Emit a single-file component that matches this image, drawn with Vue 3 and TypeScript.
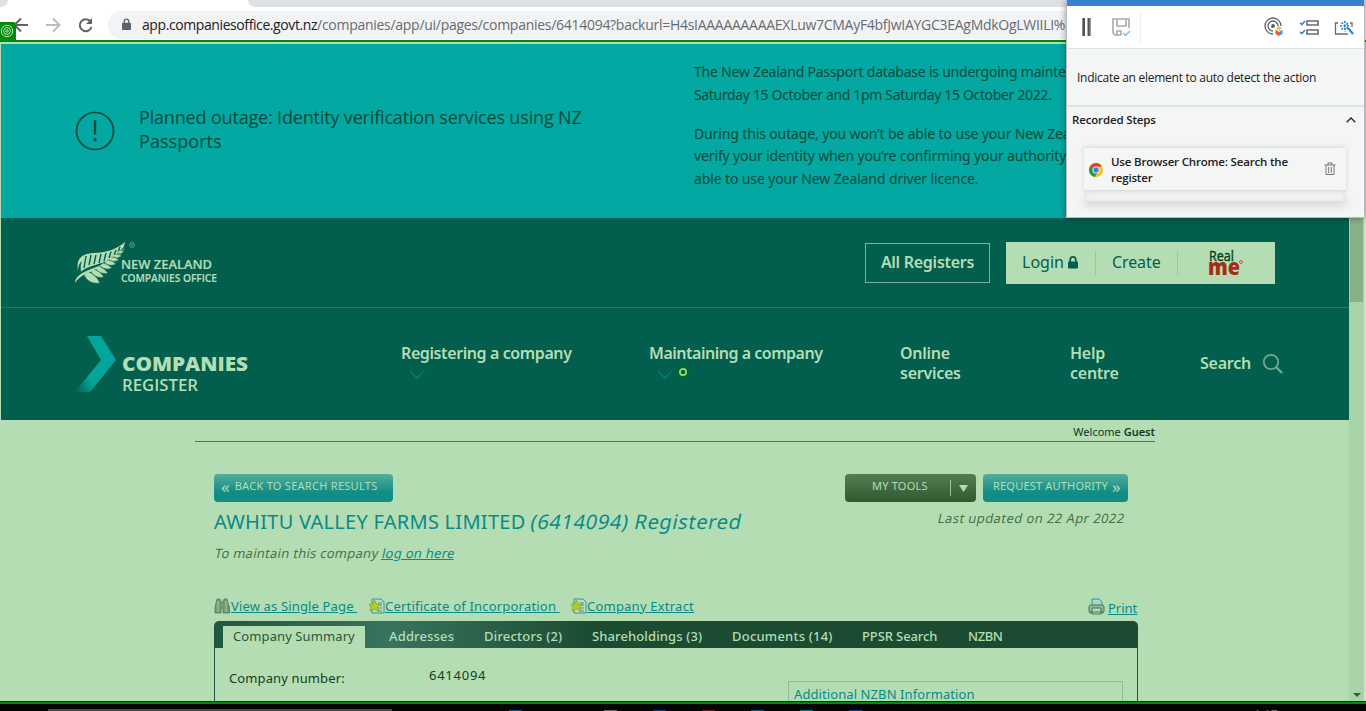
<script setup lang="ts">
interface Tab { label: string; left: number; width: number; spacing: number }

const tabs: Tab[] = [
  { label: 'Addresses', left: 389, width: 66, spacing: 0.15 },
  { label: 'Directors (2)', left: 484, width: 79, spacing: 0.2 },
  { label: 'Shareholdings (3)', left: 592, width: 112, spacing: 0.12 },
  { label: 'Documents (14)', left: 732, width: 101, spacing: 0.22 },
  { label: 'PPSR Search', left: 862, width: 76, spacing: -0.1 },
  { label: 'NZBN', left: 968, width: 35, spacing: -0.4 },
]
const gapBefore = (i: number): string => {
  const previousEnd = i === 0 ? 365 : tabs[i - 1].left + tabs[i - 1].width
  return `${tabs[i].left - previousEnd}px`
}
const lowerLeaflets = [
  'M9 34Q14 44 25 42Q21 34 14 31', 'M16 31Q21 38 29 36Q25 30 19 28', 'M21 28Q26 34 33 32Q29 27 24 25',
  'M25 25Q31 30 37 27Q33 23 28 22', 'M30 22Q35 26 41 23Q37 19 32 19', 'M34 19Q39 22 44 19Q41 16 36 16',
  'M38 16Q43 18 47 15Q44 13 40 13', 'M42 12Q46 14 49 10Q46 9 43 10',
]
</script>

<template>
  <div class="screen">
    <header class="browser">
      <div class="strip"><i class="strip-left"></i><i class="active-tab"></i><i class="strip-rest"></i></div>
      <div class="toolbar">
        <svg class="nav-icons" width="96" height="20" viewBox="0 0 96 20" fill="none" stroke="#5f6368" stroke-width="2">
          <path d="M16 10H3M9 3.500L2.500 10L9 16.500" />
          <path d="M34 10H47M41 3.500L47.500 10L41 16.500" stroke="#babcbe" />
          <path d="M78.500 6.500A6 6 0 1 0 79.500 12" /><path d="M80 3V9H74Z" fill="#5f6368" stroke="none" />
        </svg>
        <div class="address">
          <svg width="9" height="13" viewBox="0 0 10 14"><path d="M2.500 6V3.500a2.500 2.500 0 0 1 5 0V6" fill="none" stroke="#5f6368" stroke-width="1.500" /><rect y="5" width="10" height="8" rx="1" fill="#5f6368" /></svg>
          <span class="url"><b>app.companiesoffice.govt.nz</b>/companies/app/ui/pages/companies/6414094?backurl=H4sIAAAAAAAAAEXLuw7CMAyF4bfJwIAYGC3EAgMdkOgLWIILI%</span>
        </div>
      </div>
    </header>
    <div class="target-badge">
      <svg width="14" height="14" viewBox="0 0 14 14" fill="none" stroke="#b9e3ba"><circle cx="7" cy="7" r="5.700" /><circle cx="7" cy="7" r="3.400" /><circle cx="7" cy="7" r="1.200" /></svg>
    </div>

    <div class="viewport">
      <main class="page">
        <section class="banner">
          <svg class="alert" width="40" height="40" viewBox="0 0 40 40" fill="none" stroke="#064b39" stroke-width="1.700"><circle cx="20" cy="20" r="18.500" /><path d="M20 9V23.500" stroke-width="2.400" /><circle cx="20" cy="28.700" r="1.600" fill="#064b39" stroke="none" /></svg>
          <h2>Planned outage: Identity verification services using NZ<br><span>Passports</span></h2>
          <div class="notice">
            <p><span class="n1">The New Zealand Passport database is undergoing mainte</span><br><span class="n2">Saturday 15 October and 1pm Saturday 15 October 2022.</span></p>
            <p><span class="n3">During this outage, you won’t be able to use your New Zea</span><br><span class="n4">verify your identity when you’re confirming your authority</span><br><span class="n5">able to use your New Zealand driver licence.</span></p>
          </div>
        </section>

        <section class="office">
          <svg class="office-logo" width="146" height="46" viewBox="0 0 146 46" fill="#b4ddb4">
            <g>
              <path d="M0 42C0 36 6 32 16 28Q42 19 50 6Q45 18 32 24C17 31 5 33 0 42Z" />
              <path d="M3 30C1 19 5 13 18 12C31 12 42 8 50 1Q49 7 46 10Q38 20 24 23Q9 27 6 31Q5 24 7 20Q3 23 3 30Z" />
              <path d="M9 27L11 15M14 24L16 14M19 23L21 14M24 22L26 13M29 20L31 12M34 17L36 10.500M39 14L41 9M43 11L45 6" fill="none" stroke="#025e4d" stroke-width="1.400" />
              <path d="M6 31C17 23 39 23 48 7" fill="none" stroke="#025e4d" stroke-width=".700" />
              <path v-for="d in lowerLeaflets" :key="d" :d="d" stroke="#025e4d" stroke-width=".500" />
            </g>
            <circle cx="57" cy="4" r="2.400" fill="none" stroke="#75ad91" stroke-width=".800" /><path d="M56 4H58" stroke="#75ad91" />
            <text x="46" y="28" textLength="91" lengthAdjust="spacingAndGlyphs" class="logo-text">NEW ZEALAND</text>
            <text x="46" y="41" textLength="96" lengthAdjust="spacingAndGlyphs" class="logo-small">COMPANIES OFFICE</text>
          </svg>
          <a class="registers">All Registers</a>
          <div class="account">
            <a class="login">Login <svg width="10" height="13" viewBox="0 0 10 13"><path d="M2.200 6V3.700a2.800 2.800 0 0 1 5.600 0V6" fill="none" stroke="#025e4d" stroke-width="1.700" /><rect y="5.500" width="10" height="7" rx="1" fill="#025e4d" /></svg></a>
            <a class="create">Create</a>
            <svg class="realme" width="36" height="30" viewBox="0 0 36 30"><text x="-1" y="13" textLength="25" lengthAdjust="spacingAndGlyphs" class="real">Real</text><text x="-2" y="27" textLength="32" lengthAdjust="spacingAndGlyphs" class="me">me</text><circle cx="31" cy="14" r="1.500" fill="none" stroke="#b66a43" /></svg>
          </div>
        </section>

        <nav class="menu">
          <svg class="register-logo" width="175" height="60" viewBox="0 0 175 60">
            <defs><linearGradient id="arrow" x1="0" y1="1" x2="1" y2="0"><stop offset="0" stop-color="#025e4d" /><stop offset=".300" stop-color="#04a69c" /><stop offset="1" stop-color="#02a59c" /></linearGradient></defs>
            <path d="M12 1H26L41 25L15 57H0L26 25Z" fill="url(#arrow)" />
            <text x="47" y="36" textLength="126" lengthAdjust="spacingAndGlyphs" class="companies">COMPANIES</text><text x="47" y="56" textLength="76" lengthAdjust="spacingAndGlyphs" class="register">REGISTER</text>
          </svg>
          <a class="m1">Registering a company<svg width="16" height="10" viewBox="0 0 16 10"><path d="M1 1L8 8L15 1" fill="none" stroke="#048071" stroke-width="1.300" /></svg></a>
          <a class="m2">Maintaining a company<svg width="34" height="10" viewBox="0 0 34 10"><path d="M1 1L8 8L15 1" fill="none" stroke="#048071" stroke-width="1.300" /><path d="M26-5L33 2L26 9L19 2Z" fill="#047000" /><circle cx="26" cy="2" r="3.100" fill="none" stroke="#9bcaaa" stroke-width="1.800" /></svg></a>
          <a class="m3">Online<br>services</a>
          <a class="m4">Help<br>centre</a>
          <a class="m5">Search</a>
          <svg class="magnifier" width="22" height="22" viewBox="0 0 22 22" fill="none" stroke="#6faa8f" stroke-width="1.800"><circle cx="9" cy="9" r="7.200" /><path d="M14 14L20 20" stroke-width="2.400" /></svg>
        </nav>

        <section class="content">
          <div class="welcome"><span>Welcome <b>Guest</b></span></div>
          <div class="actions">
            <a class="button back"><i>«</i><span>BACK TO SEARCH RESULTS</span></a>
            <a class="button tools"><span>MY TOOLS</span><svg width="20" height="16" viewBox="0 0 20 16"><path d="M.500 0V16" stroke="#9dc89d" /><path d="M9 5H18L13.500 12Z" fill="#b4ddb4" /></svg></a>
            <a class="button authority"><span>REQUEST AUTHORITY</span><i>»</i></a>
          </div>
          <div class="heading"><h1>AWHITU VALLEY FARMS LIMITED <em>(6414094) Registered</em></h1><em class="updated">Last updated on 22 Apr 2022</em></div>
          <p class="maintain"><span>To maintain this company <u>log on here</u></span></p>
          <div class="links">
            <svg width="16" height="16" viewBox="0 0 16 16"><path d="M3 1H6L7 4H9L10 1H13L14 5L15.500 9V15H9V10H7V15H1V9Z" fill="#6f9b75" stroke="#527c59" stroke-width=".800" /><path d="M4 3V14M12 3V14" stroke="#95bd97" stroke-width="1.500" /></svg>
            <u class="l1">View as Single Page&nbsp;</u>
            <svg width="16" height="16" viewBox="0 0 16 16"><path d="M3 1H12L15 4V15H3Z" fill="#b5ddc7" stroke="#428f92" /><path d="M9 5H13M10 7H13M10 10H13M8 13H13" stroke="#489799" /><path d="M5.500 2L7.500 6L11 6.500L9 9L10 13L5.500 11L1 13L2 9L0 6.500L3.500 6Z" fill="#b0cd22" stroke="#819f22" stroke-width=".700" /></svg>
            <u class="l2">Certificate of Incorporation&nbsp;</u>
            <svg width="16" height="16" viewBox="0 0 16 16"><path d="M3 1H12L15 4V15H3Z" fill="#b5ddc7" stroke="#428f92" /><path d="M9 5H13M10 7H13M10 10H13M8 13H13" stroke="#489799" /><path d="M5.500 2L7.500 6L11 6.500L9 9L10 13L5.500 11L1 13L2 9L0 6.500L3.500 6Z" fill="#b0cd22" stroke="#819f22" stroke-width=".700" /></svg>
            <u class="l3">Company Extract</u>
            <svg class="printer" width="17" height="17" viewBox="0 0 17 17"><path d="M4 7V1H11L14 4V8" fill="#a4d8c8" stroke="#458d8d" /><rect x="1" y="7" width="15" height="8" rx="2" fill="#8fbc91" stroke="#447850" /><path d="M4 10H13V16H4Z" fill="#b3dcb8" stroke="#44756b" /><path d="M2 14H15" stroke="#497a50" /></svg>
            <u class="print">Print</u>
          </div>
          <div class="tabbar"><a class="selected"><span>Company Summary</span></a><a v-for="(tab, i) in tabs" :key="tab.label" class="tab" :style="{ width: `${tab.width}px`, marginLeft: gapBefore(i), letterSpacing: `${tab.spacing}px` }">{{ tab.label }}</a></div>
          <div class="summary"><span class="label">Company number:</span><span class="number">6414094</span><div class="nzbn">Additional NZBN Information</div></div>
        </section>
      </main>
      <aside class="scrollbar"><i class="thumb"></i><i class="arrow-down"></i></aside>
    </div>
    <div class="frame-bottom"></div>
    <footer class="taskbar"><i class="search-box"></i><i class="app cyan"></i><i class="app grey"></i><i class="app navy"></i><i class="app red"></i><i class="app blue"></i><i class="app teal"></i><i class="app navy last"></i><span>1:17 pm</span></footer>

    <aside class="recorder">
      <div class="titlebar"></div>
      <div class="tools-row">
        <svg width="297" height="42" viewBox="0 0 297 42" fill="none">
          <path d="M16.500 12V30M22 12V30" stroke="#545454" stroke-width="3" /><path d="M15.500 12V30M23 12V30" stroke="#888" stroke-width="1" />
          <path d="M54 29H48L46 27V13H62V22M50 13V20H59V13M50 29V25H54V29" stroke="#aaa" stroke-width="1.600" /><path d="M56 27L58.500 29.500L63 25" stroke="#87b9e9" stroke-width="1.500" /><path d="M73.500 5V37" stroke="#eee" />
          <g stroke="#606060" stroke-width="1.300"><path d="M214 20A8 8 0 1 0 206 28" /><path d="M211 20A5 5 0 1 0 206 25" /><circle cx="206" cy="20" r="1.300" fill="#606060" /></g>
          <path d="M212 20L215 22L212 25L209 22Z" fill="#f4c052" /><path d="M208.500 23.500L212 26V30L208.500 28Z" fill="#ec5742" /><path d="M215.500 23.500L212 26V30L215.500 28Z" fill="#36a2df" />
          <path d="M240 15H251V19H240ZM240 24H251V28H240Z" stroke="#6a6a6a" stroke-width="1.600" /><path d="M233 17L235 18.500L238 15M233 26L235 27.500L238 24" stroke="#3482cf" stroke-width="1.600" />
          <path d="M271 17H268.500V28H281M283 17H285V21" stroke="#666b73" stroke-width="1.300" /><path d="M278 15V26M273 20H283M274.500 16.500L281.500 23.500M274.500 23.500L281.500 16.500" stroke="#2380d4" stroke-width="1.700" stroke-dasharray="2 1.500" /><path d="M281 22L286 28" stroke="#2380d4" stroke-width="2" />
        </svg>
      </div>
      <div class="instruction">Indicate an element to auto detect the action</div>
      <div class="steps-title"><span>Recorded Steps</span><svg width="10" height="6" viewBox="0 0 10 6"><path d="M.700 5.300L5 1L9.300 5.300" fill="none" stroke="#222" stroke-width="1.300" /></svg></div>
      <div class="step-wrap">
        <div class="step">
          <svg width="14" height="14" viewBox="0 0 14 14"><circle cx="7" cy="7" r="7" fill="#fbc116" /><path d="M7 7L.900 3.500A7 7 0 0 1 13 3.600H7Z" fill="#e33b2e" /><path d="M7 7L.900 3.500A7 7 0 0 0 6 13.900L9 8Z" fill="#219b49" /><circle cx="7" cy="7" r="3.500" fill="#fff" /><circle cx="7" cy="7" r="2.700" fill="#3d7de8" /></svg>
          <span>Use Browser Chrome: Search the<br>register</span>
          <svg class="trash" width="12" height="14" viewBox="0 0 12 14" fill="none" stroke="#777"><path d="M.500 3H11.500M4 3V1H8V3M2 3V12.500H10V3M4.700 5V11M7.300 5V11" /></svg>
        </div>
        <div class="step-space"></div>
      </div>
    </aside>
  </div>
</template>

<style>
body { margin: 0; overflow: hidden; }
</style>
<style scoped>
* { box-sizing: border-box; }
.screen { position: relative; width: 1366px; height: 711px; overflow: hidden; background: #b4ddb4; font-family: "Noto Sans", sans-serif; white-space: nowrap; }
.browser { height: 40px; background: #fff; }
.strip { height: 7px; display: flex; background: #fff; }
.strip-left { width: 8px; height: 7px; background: #dee1e6; border-bottom-right-radius: 7px; }
.active-tab { width: 240px; }
.strip-rest { flex: 1; background: #dee1e6; border-bottom-left-radius: 7px; }
.toolbar { height: 33px; display: flex; align-items: center; padding-top: 4px; }
.nav-icons { margin: 0 2px 2px 12px; }
.address { width: 1200px; height: 28px; display: flex; align-items: center; gap: 11px; padding-left: 14px; margin: 0 0 2px -2px; background: #f1f3f4; border-radius: 14px; }
.url { font: 14px "Open Sans", sans-serif; color: #686b70; letter-spacing: -.28px; }
.url b { font-weight: 400; color: #202124; letter-spacing: -.41px; }
.target-badge { position: absolute; left: 0; top: 22px; width: 16px; height: 19px; padding: 0 2px 1px 0; background: #008a0e; border-radius: 0 3px 0 0; display: flex; align-items: center; justify-content: center; }
.viewport { height: 661px; display: flex; border-top: 2px solid #008a0e; }
.page { width: 1349px; height: 659px; border-top: 2px solid #b4ddb4; border-left: 1px solid #b4ddb4; overflow: hidden; }
.scrollbar { width: 17px; padding: 0 2px 4px; background: #a9d3a9; display: flex; flex-direction: column; align-items: center; justify-content: space-between; border-right: 2px solid #c4e8c4; }
.thumb { width: 13px; height: 260px; background: #89b089; }
.arrow-down { border-left: 4px solid transparent; border-right: 4px solid transparent; border-top: 4px solid #315f31; }
.banner { height: 174px; background: #03a8a2; color: #064b39; display: flex; }
.alert { margin: 67px 0 0 74px; }
.banner h2 { margin: 61px 0 0 24px; width: 555px; font: 400 18px/24px "Open Sans", sans-serif; letter-spacing: -.17px; }
.banner h2 span { letter-spacing: .05px; }
.notice { padding-top: 17px; font-size: 14px; line-height: 22.600px; }
.notice p { margin: 0 0 16.500px; }
.n1 { letter-spacing: -.22px; }
.n2 { letter-spacing: -.34px; }
.n3, .n4 { letter-spacing: -.13px; }
.n5 { letter-spacing: -.12px; }
.office { height: 90px; background: #025e4d; border-bottom: 1px solid #317359; display: flex; }
.office-logo { margin: 23px 0 0 74px; }
.logo-text { font: 600 12px "Open Sans"; stroke: #b4ddb4; stroke-width: .2; }
.logo-small { font: 600 10.500px "Open Sans"; stroke: #b4ddb4; stroke-width: .2; }
.registers { margin: 25px 16px 0 644px; width: 125px; height: 40px; border: 1px solid #79b398; color: #b4ddb4; text-align: center; font: 600 16px/37px "Noto Sans"; letter-spacing: -.27px; }
.account { width: 269px; height: 42px; margin-top: 24px; background: #b4ddb4; display: flex; align-items: center; color: #025e4d; font-size: 16px; }
.login { width: 90px; height: 24px; padding-left: 16px; border-right: 1px solid #99c7a0; line-height: 22px; }
.login svg { margin-bottom: -1px; }
.create { width: 82px; height: 24px; padding-left: 16px; border-right: 1px solid #99c7a0; line-height: 22px; letter-spacing: -.1px; }
.realme { margin-left: 32px; overflow: visible; }
.real { font: 15px "Open Sans"; fill: #073e17; stroke: #073e17; stroke-width: .4; }
.me { font: 800 23px "Open Sans"; fill: #a72c11; }
.menu { height: 112px; background: #025e4d; display: flex; color: #b4ddb4; font-weight: 600; font-size: 16px; line-height: 20px; letter-spacing: -.25px; }
.register-logo { margin: 27px 1px 0 74px; }
.companies { font: 800 20px "Open Sans"; fill: #b4ddb4; letter-spacing: 0; }
.register { font: 600 16px "Open Sans"; fill: #b4ddb4; letter-spacing: 0; }
.menu a { margin-top: 35px; }
.menu a svg { display: block; margin: 7px 0 0 8px; overflow: visible; }
.menu .m1 { width: 248px; margin-left: 150px; letter-spacing: -.4px; }
.m2 { width: 251px; letter-spacing: -.48px; }
.m3 { width: 170px; }
.m4 { width: 130px; }
.menu .m5 { width: 63px; margin-top: 45px; }
.magnifier { margin: 45px 0 0 -1px; }
.content { padding-left: 194px; }
.welcome { width: 960px; height: 22px; border-bottom: 1px solid #497f52; text-align: right; font-size: 11px; line-height: 24px; color: #10371c; }
.welcome b { font-weight: 600; }
.actions { padding: 32px 0 0 19px; display: flex; }
.button { height: 28px; border-radius: 4px; background: linear-gradient(#52ae9a, #118d86 65%); color: #b4ddb4; font-size: 11px; line-height: 24px; display: flex; }
.button i { font-style: normal; font-size: 17px; line-height: 25px; }
.back { width: 179px; padding-left: 7px; gap: 5px; }
.back span { letter-spacing: .28px; }
.tools { width: 131px; margin-left: 452px; padding-left: 27px; gap: 22px; background: linear-gradient(#527e54, #32582f); }
.tools span { letter-spacing: .22px; }
.tools svg { margin-top: 6px; }
.authority { width: 145px; margin-left: 7px; padding-left: 10px; gap: 4px; }
.authority span { letter-spacing: .2px; }
.heading { display: flex; height: 40px; padding-left: 19px; color: #078b88; }
h1 { width: 724px; margin: 6px 0 0; font-size: 20px; line-height: 28px; font-weight: 400; letter-spacing: .27px; }
h1 em { display: inline-block; font-style: normal; transform: skewX(-12deg); letter-spacing: .65px; }
.updated { margin-top: 6px; font-size: 13px; line-height: 21px; color: #467348; letter-spacing: .42px; font-style: normal; height: 21px; transform: skewX(-12deg); }
.maintain { margin: 0 0 0 20px; font-size: 13px; line-height: 23px; color: #467348; letter-spacing: .27px; }
.maintain span { display: inline-block; transform: skewX(-12deg); }
.maintain u { color: #078b88; }
.links { display: flex; align-items: center; height: 30px; margin: 26px 0 0 19px; color: #078b88; font-size: 13px; }
.l1 { width: 139px; padding-left: 1px; letter-spacing: .15px; }
.l2 { width: 186px; letter-spacing: .2px; }
.l3 { width: 501px; letter-spacing: .22px; }
.print { margin: 3px 0 0 3px; }
.tabbar { width: 924px; height: 27px; margin-left: 19px; border-radius: 5px 5px 0 0; background: linear-gradient(90deg, #20583f 0, #38735e 19%, #1b4c31 41%); display: flex; align-items: flex-end; color: #b4ddb4; font-size: 13px; line-height: 22px; }
.selected { width: 142px; height: 22px; margin-left: 9px; background: #b4ddb4; color: #275936; padding-left: 10px; line-height: 21px; letter-spacing: .1px; }
.tab { height: 23px; font-weight: 500; }
.summary { display: flex; width: 924px; height: 60px; margin-left: 19px; border: 1px solid #20583f; border-top: 0; padding-left: 14px; font-size: 13px; color: #163e20; }
.label { width: 200px; padding-top: 21px; letter-spacing: .12px; }
.number { width: 359px; padding-top: 18px; letter-spacing: .75px; }
.nzbn { width: 335px; height: 50px; margin-top: 33px; border: 1px solid #90bd94; padding: 3px 5px; color: #078b88; letter-spacing: .09px; }
.frame-bottom { height: 3px; border-top: 1px solid #063c09; background: #008a0e; }
.taskbar { height: 7px; background: #050506; display: flex; align-items: flex-end; }
.search-box { width: 344px; height: 2px; margin-left: 48px; background: #4c4949; }
.app { width: 13px; height: 1px; margin-left: 36px; background: #075677; }
.cyan { margin-left: 117px; }
.grey { margin-left: 82px; background: #666; }
.navy { margin-left: 36px; background: #073e78; }
.red { background: #631c1c; }
.teal { background: #087078; }
.taskbar span { height: 3px; overflow: hidden; margin-left: 392px; color: #666; font-size: 12px; line-height: 14px; }
.recorder { position: absolute; left: 1066px; top: 0; width: 299px; height: 218px; background: #f4f6f6; border: 1px solid #b8bcbc; border-top: 0; box-shadow: 0 0 7px rgba(0,0,0,.4); color: #202020; font: 12px "Open Sans", sans-serif; }
.titlebar { height: 6px; background: #3582d3; }
.tools-row { height: 43px; background: #fff; border-bottom: 1px solid #dfe3e3; }
.instruction { height: 58px; padding: 0 0 0 10px; line-height: 58px; border-bottom: 2px solid #dfe2e2; letter-spacing: -.27px; }
.steps-title { height: 25px; padding: 0 8px 0 5px; display: flex; justify-content: space-between; align-items: center; font-weight: 600; font-size: 11.500px; letter-spacing: -.15px; }
.step-wrap { margin: 16px 18px 0 17px; }
.step { height: 43px; display: flex; align-items: center; padding: 2px 10px 0 5px; gap: 8px; background: #f4f6f6; border-bottom: 1px solid #dfe1e1; box-shadow: 0 -1px 5px rgba(0,0,0,.13); font-weight: 600; font-size: 11.500px; line-height: 16px; letter-spacing: -.18px; }
.trash { margin-left: auto; margin-bottom: 2px; }
.step-space { height: 10px; box-shadow: inset 0 0 6px #ddd, 0 5px 9px rgba(0,0,0,.12); }
</style>
